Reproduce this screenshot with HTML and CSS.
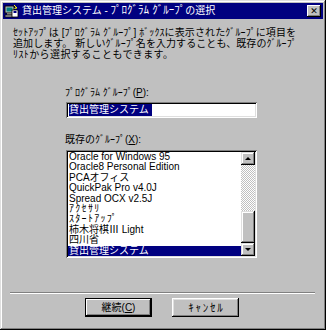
FILE: index.html
```html
<!DOCTYPE html>
<html lang="ja">
<head>
<meta charset="utf-8">
<link rel="stylesheet" href="styles.css">
</head>
<body>
<div class="window">
  <div class="titlebar">
    <svg class="appicon" width="15" height="15" viewBox="0 0 15 15">
      <rect x="1" y="2" width="9" height="7" fill="#c0c0c0" stroke="#000" stroke-width="1"/>
      <rect x="2.5" y="3.5" width="6" height="4" fill="#008080"/>
      <rect x="3" y="9" width="5" height="2" fill="#808080"/>
      <rect x="1" y="11" width="9" height="2" fill="#c0c0c0" stroke="#000" stroke-width="0.8"/>
      <rect x="8" y="6" width="6" height="7" fill="#fff" stroke="#000" stroke-width="0.8"/>
      <rect x="9.5" y="7" width="3" height="2" fill="#000080"/>
      <path d="M10 1 L13 4 L11 4 L11 5" fill="none" stroke="#ffff00" stroke-width="1"/>
    </svg>
    <span class="title">貸出管理システム - <span class="hw">ﾌﾟﾛｸﾞﾗﾑ ｸﾞﾙｰﾌﾟ</span>の選択</span>
    <div class="closebtn"><span class="x">✕</span></div>
  </div>
  <div class="desc">
    <span class="line just">ｾｯﾄｱｯﾌﾟは [ﾌﾟﾛｸﾞﾗﾑ ｸﾞﾙｰﾌﾟ] ﾎﾞｯｸｽに表示されたｸﾞﾙｰﾌﾟに項目を</span>
    <span class="line just">追加します。 新しいｸﾞﾙｰﾌﾟ名を入力することも、既存のｸﾞﾙｰﾌﾟ</span>
    <span class="line last">ﾘｽﾄから選択することもできます。</span>
  </div>
  <div class="form">
    <div class="label first">ﾌﾟﾛｸﾞﾗﾑ ｸﾞﾙｰﾌﾟ(<u>P</u>):</div>
    <div class="input"><span class="sel">貸出管理システム</span></div>
    <div class="label second">既存のｸﾞﾙｰﾌﾟ(<u>X</u>):</div>
    <div class="listbox">
      <ul class="items">
        <li>Oracle for Windows 95</li>
        <li>Oracle8 Personal Edition</li>
        <li>PCAオフィス</li>
        <li>QuickPak Pro v4.0J</li>
        <li>Spread OCX v2.5J</li>
        <li class="kana">ｱｸｾｻﾘ</li>
        <li class="kana">ｽﾀｰﾄｱｯﾌﾟ</li>
        <li>柿木将棋Ⅲ Light</li>
        <li>四川省</li>
        <li class="selected">貸出管理システム</li>
      </ul>
      <div class="scrollbar">
        <div class="sbtn"><span class="arrow up"></span></div>
        <div class="track"></div>
        <div class="thumb"></div>
        <div class="sbtn"><span class="arrow down"></span></div>
      </div>
    </div>
  </div>
  <div class="separator"></div>
  <div class="buttons">
    <div class="btn default"><span>継続(<u>C</u>)</span></div>
    <div class="btn"><span class="cancel">ｷｬﾝｾﾙ</span></div>
  </div>
</div>
</body>
</html>
```

FILE: styles.css
```css
html, body {
  margin: 0;
  padding: 0;
  background: #c0c0c0;
}

body {
  font-family: "Liberation Sans", "Noto Sans CJK JP", sans-serif;
  font-size: 10px;
  color: #000;
}

.window {
  width: 326px;
  height: 330px;
  box-sizing: border-box;
  padding: 3px;
  background: #c0c0c0;
  box-shadow: inset -1px -1px #000, inset 1px 1px #dfdfdf,
              inset -2px -2px #808080, inset 2px 2px #fff;
  display: flex;
  flex-direction: column;
}

.titlebar {
  height: 16px;
  background: #000080;
  color: #fff;
  display: flex;
  align-items: center;
  padding: 0 2px 0 1px;
  gap: 2px;
}

.appicon {
  flex: none;
}

.title {
  flex: 1;
  font-size: 10px;
  line-height: 16px;
  white-space: nowrap;
  margin-left: 1px;
}

.title .hw {
  font-size: 11px;
  line-height: 0;
}

.closebtn {
  width: 14px;
  height: 12px;
  box-sizing: border-box;
  background: #c0c0c0;
  box-shadow: inset -1px -1px #000, inset 1px 1px #fff,
              inset -2px -2px #808080;
  display: flex;
  align-items: center;
  justify-content: center;
}

.closebtn .x {
  color: #000;
  font-family: "DejaVu Sans", sans-serif;
  font-size: 9px;
  font-weight: bold;
  line-height: 9px;
}

.desc {
  margin: 8px 0 0 10px;
  width: 284px;
  display: flex;
  flex-direction: column;
}

.line {
  display: block;
  line-height: 11px;
  height: 11px;
  white-space: nowrap;
}

.line.just {
  text-align: justify;
  text-align-last: justify;
  text-justify: inter-character;
}

.line.last {
  letter-spacing: 0.4px;
}

.form {
  margin-left: 63px;
  width: 191px;
  display: flex;
  flex-direction: column;
}

.label {
  line-height: 12px;
  white-space: nowrap;
  margin-left: -1px;
}

.label.first {
  margin-top: 27px;
}

.label.second {
  margin-top: 16px;
}

.input {
  margin-top: 3px;
  height: 16px;
  box-sizing: border-box;
  background: #fff;
  padding: 2px 0 0 3px;
  box-shadow: inset 1px 1px #808080, inset -1px -1px #fff,
              inset 2px 2px #000, inset -2px -2px #dfdfdf;
  line-height: 12px;
}

.sel {
  background: #000080;
  color: #fff;
  display: inline-block;
  line-height: 12px;
  padding-right: 3px;
}

.listbox {
  margin-top: 4px;
  height: 108px;
  box-sizing: border-box;
  padding: 2px;
  background: #fff;
  box-shadow: inset 1px 1px #808080, inset -1px -1px #fff,
              inset 2px 2px #000, inset -2px -2px #dfdfdf;
  display: flex;
}

.items {
  list-style: none;
  margin: 0;
  padding: 0;
  flex: 1;
  overflow: hidden;
}

.items li {
  height: 10.4px;
  line-height: 10.4px;
  padding-left: 1px;
  white-space: nowrap;
}

.items li.kana {
  letter-spacing: 1.3px;
}

.items li.selected {
  background: #000080;
  color: #fff;
}

.scrollbar {
  width: 14px;
  display: flex;
  flex-direction: column;
}

.sbtn {
  height: 13px;
  box-sizing: border-box;
  background: #c0c0c0;
  box-shadow: inset -1px -1px #000, inset 1px 1px #dfdfdf,
              inset -2px -2px #808080, inset 2px 2px #fff;
  display: flex;
  align-items: center;
  justify-content: center;
}

.arrow {
  width: 0;
  height: 0;
  border-left: 3px solid transparent;
  border-right: 3px solid transparent;
}

.arrow.up {
  border-bottom: 3px solid #000;
}

.arrow.down {
  border-top: 3px solid #000;
}

.track {
  flex: 1;
  background-color: #e0e0e0;
  background-image: repeating-conic-gradient(#ffffff 0 25%, #c0c0c0 0 50%);
  background-size: 2px 2px;
}

.thumb {
  height: 32px;
  box-sizing: border-box;
  background: #c0c0c0;
  box-shadow: inset -1px -1px #000, inset 1px 1px #dfdfdf,
              inset -2px -2px #808080, inset 2px 2px #fff;
}

.separator {
  margin: 34px 8px 0 7px;
  height: 2px;
  box-sizing: border-box;
  border-top: 1px solid #808080;
  border-bottom: 1px solid #fff;
}

.buttons {
  margin: 4px 0 0 82px;
  display: flex;
  gap: 20px;
}

.btn {
  width: 67px;
  height: 19px;
  box-sizing: border-box;
  background: #c0c0c0;
  box-shadow: inset -1px -1px #000, inset 1px 1px #fff,
              inset -2px -2px #808080, inset 2px 2px #dfdfdf;
  display: flex;
  align-items: center;
  justify-content: center;
  line-height: 12px;
}

.btn.default {
  box-shadow: inset 0 0 0 1px #000, inset -2px -2px #000, inset 2px 2px #fff,
              inset -3px -3px #808080;
}

.cancel {
  font-size: 11px;
  letter-spacing: 1.8px;
  margin-right: -1.8px;
}
```
